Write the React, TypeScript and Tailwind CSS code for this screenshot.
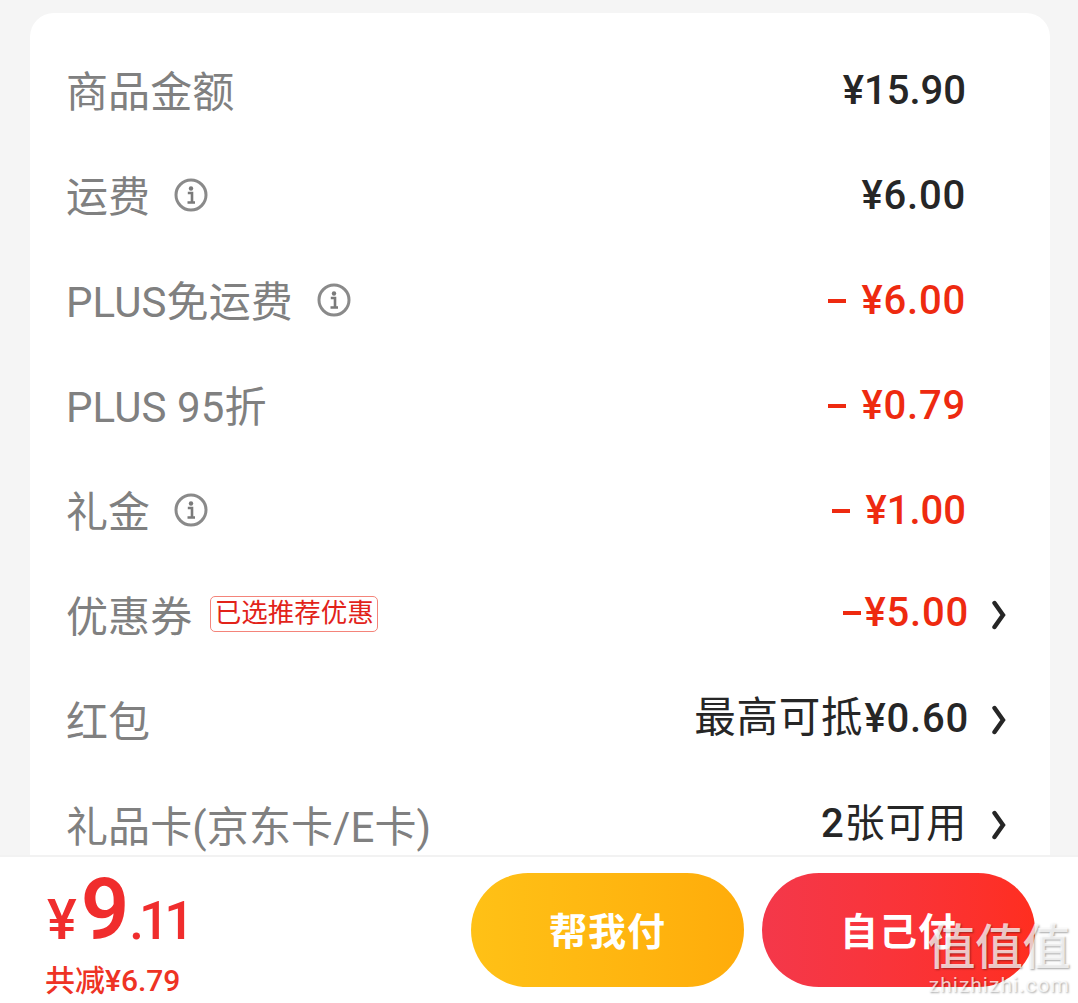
const FONT = "font-['Roboto','Noto_Sans_CJK_SC',sans-serif]";

type Row = {
  label: string;
  value: string;
  note?: string; // plain CJK text before the amount
  unit?: string; // plain CJK text after the amount
  dash?: number; // gap between the minus and the amount
  info?: boolean;
  red?: boolean;
  chevron?: boolean;
  tag?: string;
};

const rows: Row[] = [
  { label: "商品金额", value: "¥15.90" },
  { label: "运费", value: "¥6.00", info: true },
  { label: "PLUS免运费", value: "¥6.00", dash: 15, info: true, red: true },
  { label: "PLUS 95折", value: "¥0.79", dash: 15, red: true },
  { label: "礼金", value: "¥1.00", dash: 15, info: true, red: true },
  { label: "优惠券", value: "¥5.00", dash: 3, red: true, chevron: true, tag: "已选推荐优惠" },
  { label: "红包", value: "¥0.60", note: "最高可抵", chevron: true },
  { label: "礼品卡(京东卡/E卡)", value: "2", unit: "张可用", chevron: true },
];

function InfoDot() {
  return (
    <svg width="34" height="34" viewBox="0 0 34 34" className="ml-[24px] -mt-[2px] shrink-0">
      <circle cx="17" cy="17" r="15" fill="none" stroke="#8a8a8a" strokeWidth="3" />
      <circle cx="17" cy="10.5" r="2.2" fill="#7a7a7a" />
      <path d="M13.8 15 H18 V24 M13.5 24.5 H21" fill="none" stroke="#7a7a7a" strokeWidth="2.6" />
    </svg>
  );
}

function Chevron() {
  return (
    <svg width="16" height="30" viewBox="0 0 16 30" className="ml-[22px] -mt-[2px] shrink-0">
      <path d="M3.5 3 L12 15 L3.5 27" fill="none" stroke="#262626" strokeWidth="4.4" strokeLinejoin="miter" strokeLinecap="round" />
    </svg>
  );
}

function PriceRow({ row }: { row: Row }) {
  // the reference's digits run a bit wider than Roboto, except its narrow 1
  const spacing = row.value.includes("1") ? "tracking-normal" : "tracking-[0.8px]";
  return (
    <div className="h-[105px] shrink-0 flex items-center justify-between pl-[36px]">
      <div className="flex items-center">
        <span className="mt-[4px] text-[42px] leading-none text-[#808080] tracking-[0.1px] whitespace-nowrap">{row.label}</span>
        {row.info && <InfoDot />}
        {row.tag && (
          <span className="ml-[18px] -mt-[4px] h-[36px] w-[168px] justify-center flex items-center rounded-[5px] border border-[#f4847a] text-[26.5px] leading-none text-[#e2231a] whitespace-nowrap">
            {row.tag}
          </span>
        )}
      </div>
      <div className={`flex items-center ${row.chevron ? "pr-[43px]" : "pr-[84px]"}`}>
        <span className={`flex items-baseline text-[40px] leading-none font-medium whitespace-nowrap ${spacing} ${row.unit ? "-mt-[3px]" : row.chevron ? "-mt-[6px]" : ""} ${row.red ? "text-[#ee2a10]" : "text-[#262626]"}`}>
          {row.dash !== undefined && (
            <span className="w-[18px] h-[4px] self-center bg-[#ee2a10]" style={{ marginRight: row.dash }} />
          )}
          {row.note && <span className="font-normal text-[41.5px] mr-[1px]">{row.note}</span>}
          {row.value}
          {row.unit && <span className="font-normal text-[40px] mr-[2px]">{row.unit}</span>}
        </span>
        {row.chevron && <Chevron />}
      </div>
    </div>
  );
}

export default function App() {
  return (
    <div className={`relative h-[1003px] w-[1078px] flex flex-col overflow-hidden bg-[#f5f5f5] ${FONT}`}>
      <div className="h-[855px] shrink-0 overflow-hidden pl-[30px] pr-[28px] pt-[13px]">
        <div className="h-[900px] rounded-t-[24px] bg-white pt-[25px] flex flex-col">
          {rows.map((row) => (
            <PriceRow key={row.label} row={row} />
          ))}
        </div>
      </div>

      <div className="flex-1 flex items-start justify-between border-t-2 border-[#f2f2f2] bg-white pl-[46px] pr-[43px] pt-[16px]">
        <div className="flex flex-col text-[#f02d2d]">
          <div className="h-[76px] -mt-[5px] flex items-baseline font-medium leading-none pl-[1px]">
            <span className="text-[56px]">¥</span>
            <span className="text-[85px] font-semibold ml-[4px] tracking-[-2px]">9</span>
            <span className="text-[53px] ml-[2px] tracking-[-5px]">.11</span>
          </div>
          <span className="mt-[22px] -ml-[1px] text-[30px] leading-none font-medium text-[#ee3324]">共减¥6.79</span>
        </div>
        <div className="flex items-center gap-[18px]">
          <button className="w-[273px] h-[114px] pt-[4px] rounded-full bg-gradient-to-r from-[#ffc116] to-[#ffac0a] text-white text-[38px] font-bold tracking-[1px]">
            帮我付
          </button>
          <button className="w-[273px] h-[114px] pt-[4px] rounded-full bg-gradient-to-r from-[#f4384a] to-[#ff2e1f] text-white text-[38px] font-bold tracking-[1px]">
            自己付
          </button>
        </div>
      </div>

      {/* site watermark over the corner */}
      <div className="absolute right-[8px] bottom-[6px] flex flex-col items-end text-white/75 [text-shadow:1px_1px_2px_rgba(0,0,0,0.35)]">
        <span className="text-[48px] leading-[50px] tracking-[-0.5px] font-medium">值值值</span>
        <span className="text-[21px] leading-[24px] tracking-[1px]">zhizhizhi.com</span>
      </div>
    </div>
  );
}
